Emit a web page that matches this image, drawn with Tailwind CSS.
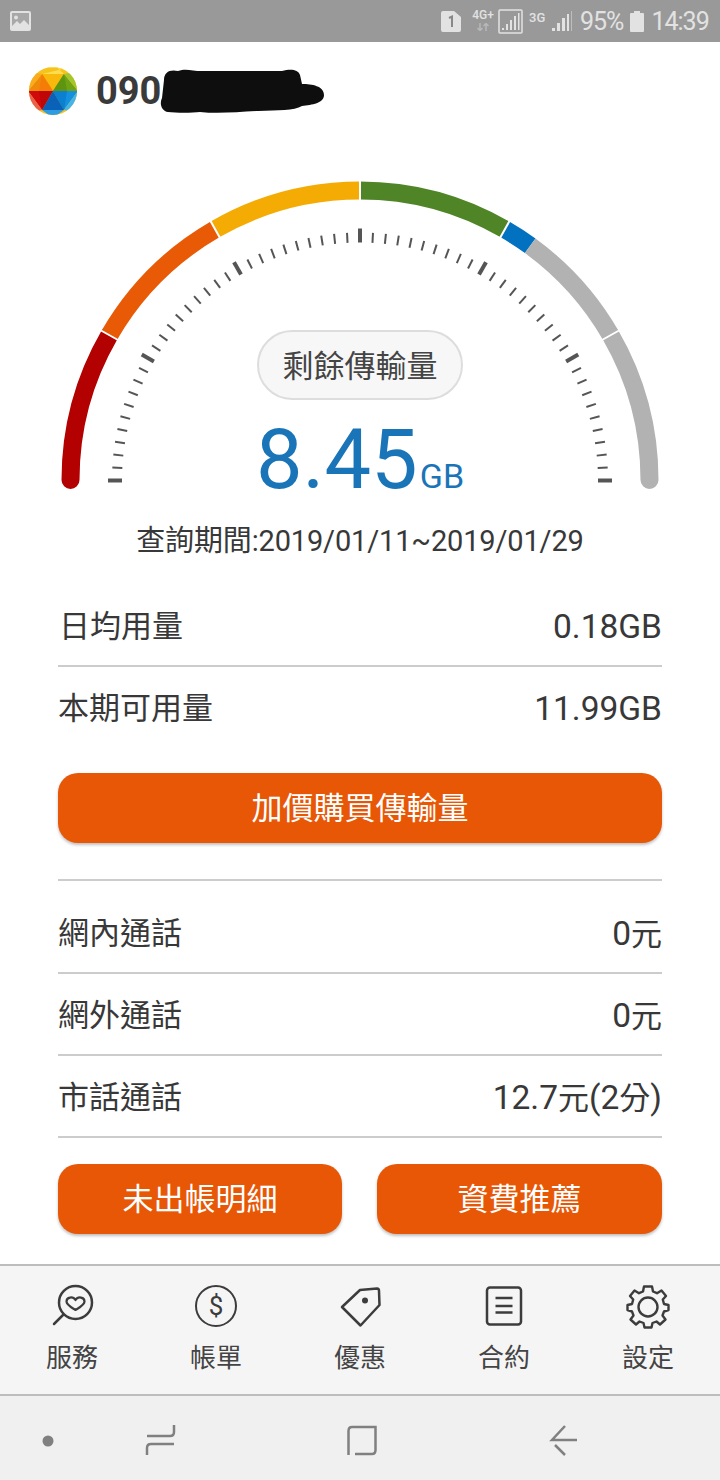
<!DOCTYPE html>
<html lang="zh-Hant">
<head>
  <meta charset="UTF-8">
  <meta name="viewport" content="width=device-width, initial-scale=1.0">
  <title>Usage</title>
  <script src="https://cdn.jsdelivr.net/npm/@tailwindcss/browser@4"></script>
</head>
<body class="bg-white font-['Roboto','Noto_Sans_CJK_TC',sans-serif] text-[#383838]">
<div class="w-[720px] h-[1480px] flex flex-col overflow-hidden">

  <!-- Status bar -->
  <div class="h-[42px] bg-[#999999] flex items-center pl-[10px] text-[#e2e2e2] shrink-0">
    <svg width="21" height="20" viewBox="0 0 21 20"><rect width="21" height="20" rx="2" fill="#e2e2e2"/><rect x="2" y="2" width="17" height="16" fill="#a8a8a8"/><circle cx="6" cy="6.5" r="2" fill="#e2e2e2"/><path d="M2 15l5-5 3 3 4-4 5 5v4H2z" fill="#e2e2e2"/></svg>
    <svg class="ml-[410px]" width="20" height="21" viewBox="0 0 20 21"><path d="M2 0h11l7 6v13a2 2 0 0 1-2 2H2a2 2 0 0 1-2-2V2a2 2 0 0 1 2-2z" fill="#e2e2e2"/><path d="M8 7l3-1.500V16" stroke="#888" stroke-width="2" fill="none"/></svg>
    <div class="ml-[10px] w-[24px] flex flex-col items-center leading-none text-[12px] font-medium h-[24px]">
      <span>4G+</span>
      <svg class="mt-[2px]" width="14" height="8" viewBox="0 0 14 8"><path d="M4 0v7M1.500 5L4 7.500 6.500 5M10 8V1M7.500 3L10 .5 12.500 3" stroke="#b8b8b8" stroke-width="1.500" fill="none"/></svg>
    </div>
    <svg class="ml-[3px]" width="25" height="25" viewBox="0 0 25 25"><rect x="1" y="1" width="23" height="23" rx="1" fill="none" stroke="#e2e2e2" stroke-width="1.500"/><path d="M4 21h2v-2H4zM8 21h2v-6H8zM12 21h2v-10h-2zM16 21h2V7h-2z" fill="#e2e2e2"/><path d="M20 21h1.500V4H20z" fill="#e2e2e2"/></svg>
    <span class="ml-[6px] w-[18px] -mt-[8px] text-[13px] font-medium leading-none">3G</span>
    <svg class="ml-[4px]" width="22" height="22" viewBox="0 0 22 22"><path d="M1 21h3v-3H1zM6 21h3v-8H6zM11 21h3V8h-3zM16 21h2V4h-2z" fill="#e2e2e2"/><path d="M20 21h1V1h-1z" fill="#bdbdbd"/></svg>
    <span class="ml-[7px] text-[25px] tracking-[-1px] leading-none">95%</span>
    <svg class="ml-[7px]" width="14" height="21" viewBox="0 0 14 21"><path d="M4 0h6v2h3a1 1 0 0 1 1 1v17a1 1 0 0 1-1 1H1a1 1 0 0 1-1-1V3a1 1 0 0 1 1-1h3z" fill="#e2e2e2"/></svg>
    <span class="ml-[7px] text-[25px] tracking-[-1px] leading-none">14:39</span>
  </div>

  <!-- Phone number -->
  <div class="h-[98px] flex items-center pl-[28px] relative shrink-0">
    <svg width="50" height="50" viewBox="27 66 50 50" class="shrink-0">
      <defs><clipPath id="ball"><ellipse cx="52" cy="91" rx="24" ry="24"/></clipPath></defs>
      <g clip-path="url(#ball)">
        <rect x="27" y="66" width="50" height="50" fill="#f6c21c"/>
        <polygon points="52,91 41,74 63,74" fill="#f9b80c"/>
        <polygon points="41,74 63,74 52,64 38,68 66,68" fill="#fddc4e"/>
        <polygon points="52,91 27,91 41,74" fill="#f08a0a"/>
        <polygon points="52,91 38,91 41,74" fill="#f47d08"/>
        <polygon points="27,91 41,74 30,72" fill="#f8ac1e"/>
        <polygon points="52,91 63,74 77,91" fill="#6fa314"/>
        <polygon points="52,91 66,91 63,74" fill="#5d9410"/>
        <polygon points="77,91 63,74 74,72" fill="#a3c62e"/>
        <polygon points="52,91 27,91 41,110" fill="#d00a0a"/>
        <polygon points="52,91 38,91 41,110" fill="#c00606"/>
        <polygon points="27,91 41,110 28,112" fill="#e9604e"/>
        <polygon points="52,91 77,91 63,110" fill="#1590de"/>
        <polygon points="52,91 66,91 63,110" fill="#0b7fd0"/>
        <polygon points="77,91 63,110 76,112" fill="#43b4ec"/>
        <polygon points="52,91 41,110 63,110" fill="#0a62b8"/>
        <polygon points="41,110 63,110 52,118" fill="#2f9ce2"/>
      </g>
    </svg>
    <span class="ml-[18px] text-[38px] font-bold leading-none text-[#3a3a3a]">090</span>
    <svg class="absolute left-[158px] top-[24px]" width="170" height="48" viewBox="0 0 170 48"><path d="M6 14C6 6 12 3 20 5c8-3 14 0 24 0l80 0c8-2 16-2 18 4l2 9c10 0 22 2 22 11 0 8-12 10-22 11-8 5-24 4-44 5-20 1-40 3-58 1-8 1-24 1-32 0C4 45 1 38 4 32z" fill="#0e0e0e"/></svg>
  </div>

  <!-- Gauge -->
  <div class="relative h-[380px] shrink-0 flex flex-col items-center">
    <svg class="absolute left-0 top-0" width="720" height="380" viewBox="0 140 720 380" fill="none">
      <path d="M70.500 480A289.500 289.500 0 0 1 109.300 335.250" stroke="#b30000" stroke-width="18" stroke-linecap="round"/>
      <path d="M649.500 480A289.500 289.500 0 0 0 610.700 335.250" stroke="#b2b2b2" stroke-width="18" stroke-linecap="round"/>
      <path d="M109.300 335.250A289.500 289.500 0 0 1 215.250 229.300" stroke="#e85a06" stroke-width="18"/>
      <path d="M215.250 229.300A289.500 289.500 0 0 1 360 190.500" stroke="#f4ab04" stroke-width="18"/>
      <path d="M360 190.500A289.500 289.500 0 0 1 504.750 229.300" stroke="#4f8527" stroke-width="18"/>
      <path d="M504.750 229.300A289.500 289.500 0 0 1 530.200 245.800" stroke="#0272c0" stroke-width="18"/>
      <path d="M530.200 245.800A289.500 289.500 0 0 1 610.700 335.250" stroke="#b2b2b2" stroke-width="18"/>
      <g stroke="#fff" stroke-width="2">
        <path d="M101 330.500L118 340M210.500 221L220 238M360 180v21M509.500 221L500 238M619 330.500L602 340"/>
      </g>
      <g id="ticks" stroke="#555"></g>
    </svg>
    <div class="relative mt-[190px] w-[206px] h-[70px] pt-[3px] rounded-full border-2 border-[#dddddd] bg-[#f7f7f7] flex items-center justify-center text-[31px] text-[#444] leading-none">剩餘傳輸量</div>
    <div class="relative mt-[19px] flex items-baseline text-[#1a75b8] leading-none">
      <span class="text-[83px] leading-[82px]">8.45</span>
      <span class="text-[34px] ml-[2px]">GB</span>
    </div>
  </div>

  <div class="text-center text-[29px] tracking-[-0.15px] leading-none -mt-[1px] h-[42px] shrink-0 flex justify-center items-start pt-[8px]">查詢期間:2019/01/11~2019/01/29</div>

  <!-- Data usage -->
  <div class="mx-[58px] flex flex-col text-[31px] mt-[25px]">
    <div class="h-[81px] flex items-center justify-between border-b-2 border-[#cccccc] pt-[4px] pl-[1px]"><span>日均用量</span><span class="text-[33.500px]">0.18GB</span></div>
    <div class="h-[83px] flex items-center justify-between pt-[2px]"><span>本期可用量</span><span class="text-[33.500px]">11.99GB</span></div>
    <button class="mt-[23px] h-[70px] pt-[3px] rounded-[20px] bg-[#e85706] text-white text-[31px] shadow-[0_2px_3px_rgba(0,0,0,0.25)]">加價購買傳輸量</button>

    <div class="mt-[36px] border-t-2 border-[#cccccc]">
      <div class="h-[93px] flex items-center justify-between border-b-2 border-[#cccccc] pt-[15px]"><span>網內通話</span><span><span class="text-[33.500px]">0</span>元</span></div>
      <div class="h-[82px] flex items-center justify-between border-b-2 border-[#cccccc] pt-[4px]"><span>網外通話</span><span><span class="text-[33.500px]">0</span>元</span></div>
      <div class="h-[82px] flex items-center justify-between border-b-2 border-[#cccccc] pt-[4px]"><span>市話通話</span><span><span class="text-[33.500px]">12.7</span>元<span class="text-[33.500px]">(2</span>分<span class="text-[33.500px]">)</span></span></div>
    </div>

    <div class="mt-[26px] flex justify-between">
      <button class="w-[284px] h-[70px] pt-[3px] rounded-[20px] bg-[#e85706] text-white text-[31px] shadow-[0_2px_3px_rgba(0,0,0,0.25)]">未出帳明細</button>
      <button class="w-[285px] h-[70px] pt-[3px] rounded-[20px] bg-[#e85706] text-white text-[31px] shadow-[0_2px_3px_rgba(0,0,0,0.25)]">資費推薦</button>
    </div>
  </div>

  <!-- Bottom tabs -->
  <div class="mt-auto h-[132px] shrink-0 border-y-2 border-[#bdbdbd] bg-[#f5f5f5] grid grid-cols-5 text-[26px] text-[#444] leading-none">
    <div class="flex flex-col items-center pt-[18px]">
      <svg width="48" height="46" viewBox="48 1284 48 46" fill="none" stroke="#3c3c3c" stroke-width="2.500">
        <circle cx="75.500" cy="1302.500" r="16.500"/>
        <path d="M63 1315L54 1324" stroke-linecap="round"/>
        <path d="M75.500 1310c-4-2.500-9-5-9-8.500 0-4.500 6.500-5.500 9-1.500 2.500-4 9-3 9 1.500 0 3.500-5 6-9 8.500z" stroke-width="2.200" stroke-linejoin="round"/>
      </svg>
      <span class="mt-[15px]">服務</span>
    </div>
    <div class="flex flex-col items-center pt-[18px]">
      <svg width="48" height="46" viewBox="192 1284 48 46" fill="none" stroke="#3c3c3c" stroke-width="2">
        <circle cx="216" cy="1306" r="20"/>
        <text x="216" y="1315" text-anchor="middle" font-size="26" fill="#3c3c3c" stroke="none" font-family="Roboto">$</text>
      </svg>
      <span class="mt-[15px]">帳單</span>
    </div>
    <div class="flex flex-col items-center pt-[18px]">
      <svg width="48" height="46" viewBox="336 1284 48 46" fill="none" stroke="#3c3c3c" stroke-width="2.500" stroke-linejoin="round">
        <path d="M342 1307L360 1290 377 1288.500Q379 1288.500 379 1291L379.500 1305 360.500 1325.500z"/>
        <circle cx="365" cy="1300.500" r="3" fill="#3c3c3c" stroke="none"/>
      </svg>
      <span class="mt-[15px]">優惠</span>
    </div>
    <div class="flex flex-col items-center pt-[18px]">
      <svg width="48" height="46" viewBox="480 1284 48 46" fill="none" stroke="#3c3c3c" stroke-width="2.500">
        <rect x="487" y="1287.500" width="34" height="37" rx="3"/>
        <path d="M495.500 1298h17M495.500 1306h17M495.500 1312.500h17"/>
      </svg>
      <span class="mt-[15px]">合約</span>
    </div>
    <div class="flex flex-col items-center pt-[18px]">
      <svg width="48" height="46" viewBox="-24 -23 48 46" fill="none" stroke="#3c3c3c" stroke-width="2.400" stroke-linejoin="round">
        <circle r="9.500"/>
        <path d="M-4 -20.500H4L5 -15.500 9 -13.800 13.500 -16.500 18 -11 14.800 -7.500 16 -3 20.500 -2V3L16 4.500 14.500 8.500 17.500 12.500 12 17.500 8.500 14.500 4.500 16 3.500 20.500H-3.500L-4.500 16-8.500 14.500-12 17.500-17.500 12.500-14.500 8.500-16 4.500-20.500 3V-2L-16 -3-14.800 -7.500-18 -11-13.500 -16.500-9 -13.800-5 -15.500z"/>
      </svg>
      <span class="mt-[15px]">設定</span>
    </div>
  </div>

  <!-- Android nav bar -->
  <div class="h-[84px] shrink-0 bg-[#f0f0f0]">
    <svg width="720" height="84" viewBox="0 1396 720 84" fill="none" stroke="#808080" stroke-width="2.500">
      <circle cx="48" cy="1441" r="5.500" fill="#808080" stroke="none"/>
      <path d="M174 1425V1432Q174 1436 170 1436H147M147 1455V1448Q147 1444 151 1444H174"/>
      <path d="M348.500 1455V1431Q348.500 1427 352 1427H375.500V1450Q375.500 1454 372 1454H355"/>
      <path d="M577 1440H552L565 1426M555 1445L565 1455"/>
    </svg>
  </div>
</div>

<script>
  // gauge ticks, every 3 degrees, long one every 30
  const ticks = document.getElementById('ticks');
  for (let i = 0; i <= 60; i++) {
    const major = i % 10 === 0;
    const a = i * 3 * Math.PI / 180;
    const r1 = 238, r2 = major ? 252 : 248;
    const line = document.createElementNS('http://www.w3.org/2000/svg', 'line');
    line.setAttribute('x1', 360 - r1 * Math.cos(a));
    line.setAttribute('y1', 480.5 - r1 * Math.sin(a));
    line.setAttribute('x2', 360 - r2 * Math.cos(a));
    line.setAttribute('y2', 480.5 - r2 * Math.sin(a));
    line.setAttribute('stroke-width', major ? 4 : 2);
    ticks.appendChild(line);
  }
</script>
</body>
</html>
